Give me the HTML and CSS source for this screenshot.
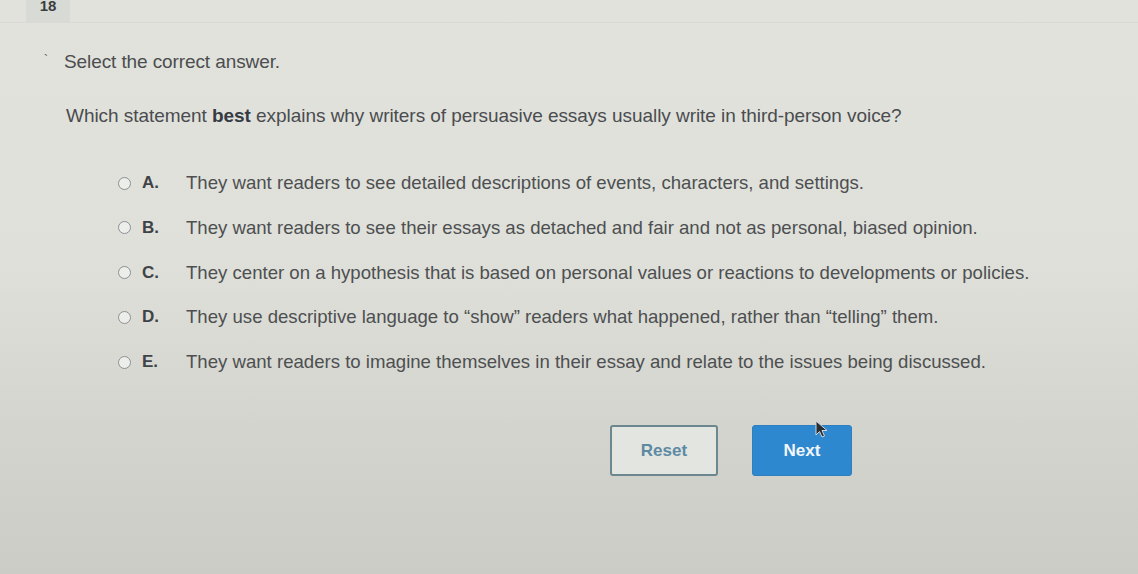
FILE: index.html
```html
<!DOCTYPE html>
<html>
<head>
<meta charset="utf-8">
<link rel="stylesheet" href="styles.css">
</head>
<body>
<div class="page">
  <div class="tabbar"><div class="tab">18</div></div>
  <div class="content">
    <div class="instruction"><span class="tick">`</span><span>Select the correct answer.</span></div>
    <p class="question">Which statement <b>best</b> explains why writers of persuasive essays usually write in third-person voice?</p>
    <ul class="options">
      <li class="option"><span class="radio"></span><span class="letter">A.</span><span class="text">They want readers to see detailed descriptions of events, characters, and settings.</span></li>
      <li class="option"><span class="radio"></span><span class="letter">B.</span><span class="text">They want readers to see their essays as detached and fair and not as personal, biased opinion.</span></li>
      <li class="option"><span class="radio"></span><span class="letter">C.</span><span class="text">They center on a hypothesis that is based on personal values or reactions to developments or policies.</span></li>
      <li class="option"><span class="radio"></span><span class="letter">D.</span><span class="text">They use descriptive language to “show” readers what happened, rather than “telling” them.</span></li>
      <li class="option"><span class="radio"></span><span class="letter">E.</span><span class="text">They want readers to imagine themselves in their essay and relate to the issues being discussed.</span></li>
    </ul>
    <div class="actions">
      <button class="btn reset">Reset</button>
      <button class="btn next">Next
        <svg class="cursor" width="16" height="20" viewBox="0 0 16 20"><path d="M1 1 L1 15 L4.5 11.5 L7 17 L9.5 16 L7 10.5 L12 10.5 Z" fill="#2a2f36" stroke="#cfd6dc" stroke-width="1"/></svg>
      </button>
    </div>
  </div>
</div>
</body>
</html>
```
FILE: styles.css
```css
html, body {
  margin: 0;
  padding: 0;
}
body {
  width: 1138px;
  height: 574px;
  overflow: hidden;
  font-family: "Liberation Sans", Arial, sans-serif;
  color: #4b4d4f;
  background: linear-gradient(180deg, #e1e2dc 0%, #dfe0da 45%, #d3d4cd 75%, #cbccc5 100%);
}
.page {
  height: 574px;
  display: flex;
  flex-direction: column;
}
.tabbar {
  height: 22px;
  padding-left: 26px;
  border-bottom: 1px solid #d9dad5;
}
.tab {
  width: 44px;
  height: 22px;
  background: #d8dad6;
  font-size: 15px;
  font-weight: bold;
  color: #3a3d40;
  text-align: center;
  line-height: 12px;
  overflow: hidden;
}
.content {
  padding-left: 64px;
}
.instruction {
  margin-top: 27px;
  font-size: 19px;
  line-height: 24px;
  position: relative;
  letter-spacing: -0.1px;
}
.tick {
  position: absolute;
  left: -20px;
  top: -2px;
  font-size: 12px;
  color: #555;
}
.question {
  margin: 31px 0 0 2px;
  font-size: 19px;
  line-height: 22px;
  color: #4a4c4f;
  letter-spacing: -0.05px;
}
.question b {
  color: #373c44;
}
.options {
  list-style: none;
  margin: 45px 0 0 54px;
  padding: 0;
}
.option {
  display: flex;
  align-items: center;
  height: 22px;
  margin-bottom: 22.75px;
  font-size: 18.6px;
}
.radio {
  width: 11px;
  height: 11px;
  border: 1.5px solid #8d9093;
  border-radius: 50%;
  background: #eceeea;
  margin-right: 11px;
  flex: none;
}
.letter {
  width: 44px;
  font-weight: bold;
  color: #3f4347;
  font-size: 17px;
}
.text {
  color: #4d4f51;
  white-space: nowrap;
}
.actions {
  display: flex;
  gap: 34px;
  margin: 52px 0 0 546px;
}
.btn {
  font-family: "Liberation Sans", Arial, sans-serif;
  font-size: 17px;
  font-weight: bold;
  height: 51px;
  border-radius: 3px;
  cursor: pointer;
  position: relative;
}
.reset {
  width: 108px;
  background: #e3e5e1;
  border: 2px solid #6d8790;
  color: #5d8aa3;
}
.next {
  width: 100px;
  background: #2e88cf;
  border: 1px solid #2d7fc0;
  color: #f2f6fa;
}
.cursor {
  position: absolute;
  left: 62px;
  top: -6px;
}
```
